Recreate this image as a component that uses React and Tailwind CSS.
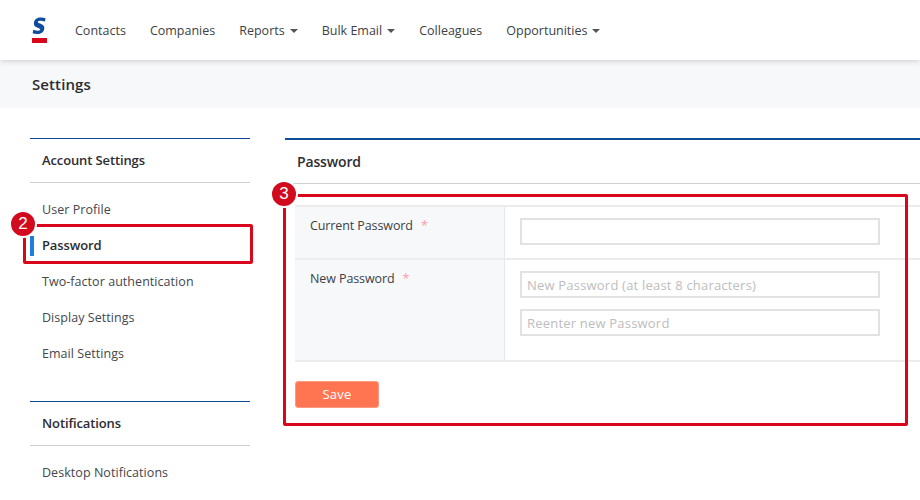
import React from 'react';

const font = { fontFamily: '"Open Sans", sans-serif' };

// --- Nav ---
const Caret = () => (
  <span className="ml-[5px] inline-block h-0 w-0 border-x-[4px] border-t-[4px] border-x-transparent border-t-[#555]" />
);

const NavItem = ({ label, caret }) => (
  <div className="mt-[2px] flex items-center text-[12.5px] text-[#3c3f45]">
    {label}
    {caret && <Caret />}
  </div>
);

const Logo = () => (
  <div className="flex w-[15px] flex-col items-center">
    <svg width="15" height="18" viewBox="0 0 15 18">
      <path
        d="M13.6 1.2 L12.9 4.6 C10.6 3.9 8.9 3.7 7.6 3.8 C6.4 3.9 5.9 4.3 5.9 4.9 C5.9 5.5 6.5 5.8 8.2 6.5 C11.2 7.6 12.6 8.9 12.3 11.5 C11.9 15.3 8.9 17 5.2 17 C3.6 17 2 16.8 0.6 16.3 L1.3 12.8 C3.3 13.5 5 13.8 6.3 13.7 C7.6 13.6 8.2 13.2 8.2 12.5 C8.2 11.9 7.6 11.5 5.8 10.8 C3 9.7 1.6 8.3 1.9 5.9 C2.3 2.3 5.3 0.6 8.9 0.6 C10.5 0.6 12.2 0.8 13.6 1.2 Z"
        fill="#0f4c9c"
      />
    </svg>
    <div className="mt-[3px] h-[5px] w-[15px] bg-[#d9061c]" />
  </div>
);

// --- Annotation badge ---
const Badge = ({ n, className }) => (
  <div
    className={`absolute flex h-[28px] w-[28px] items-center justify-center rounded-full border-2 border-white bg-[#d20a1e] text-[17px] text-white ${className}`}
    style={{ fontFamily: '"Liberation Sans", sans-serif' }}
  >
    {n}
  </div>
);

const SideTitle = ({ children }) => (
  <div className="flex h-[45px] items-center border-y border-t-[#0f4c9c] border-b-[#d0d0d0] pl-3 text-[13px] font-semibold tracking-[-0.12px] text-[#2b2d31]">
    {children}
  </div>
);

const SideItem = ({ label, active }) => (
  <div className={`relative flex h-[36px] items-center pl-3 ${active ? 'text-[13px] font-semibold tracking-[-0.12px] text-[#2b2d31]' : 'text-[12.5px] tracking-[0.05px] text-[#44474c]'}`}>
    {active && <div className="absolute left-0 top-[8px] h-[20px] w-[4px] bg-[#1a7fe0]" />}
    {label}
  </div>
);

const Field = ({ placeholder }) => (
  <input
    readOnly
    placeholder={placeholder}
    className="h-[27px] w-[360px] border-2 border-[#e2e2e2] bg-white px-[5px] text-[13px] tracking-[0.2px] outline-none placeholder:text-[#bdbdbd]"
    style={font}
  />
);

const Label = ({ children }) => (
  <div className="w-[210px] shrink-0 border-r border-[#e6e6e6] bg-[#f7f8fa] pl-[15px] pt-[10px] text-[12.5px] tracking-[-0.1px] text-[#3c3f45]">
    {children}
    <span className="ml-[8px] text-[#f7a0a6]">*</span>
  </div>
);

export default function App() {
  return (
    <div className="relative h-[500px] w-[920px] overflow-hidden bg-white" style={font}>
      {/* top nav */}
      <header className="relative z-10 flex h-[60px] items-center gap-[24px] bg-white pl-[32px] shadow-[0_1px_6px_rgba(0,0,0,0.18)]">
        <div className="mr-[4px]"><Logo /></div>
        <NavItem label="Contacts" />
        <NavItem label="Companies" />
        <NavItem label="Reports" caret />
        <NavItem label="Bulk Email" caret />
        <NavItem label="Colleagues" />
        <NavItem label="Opportunities" caret />
      </header>

      <div className="flex h-[48px] items-center bg-[#f7f8fa] pl-[32px] text-[15px] font-semibold tracking-[0.1px] text-[#2b2d31]">
        Settings
      </div>

      <div className="flex pt-[30px]">
        {/* sidebar */}
        <aside className="relative ml-[30px] w-[220px] shrink-0">
          <SideTitle>Account Settings</SideTitle>
          <div className="pt-[9px]">
            <SideItem label="User Profile" />
            <SideItem label="Password" active />
            <SideItem label="Two-factor authentication" />
            <SideItem label="Display Settings" />
            <SideItem label="Email Settings" />
          </div>
          <div className="mt-[29px]">
            <SideTitle>Notifications</SideTitle>
          </div>
          <div className="pt-[9px]">
            <SideItem label="Desktop Notifications" />
          </div>
          <div className="absolute left-[-7px] top-[86px] h-[40px] w-[230px] rounded-[2px] border-[3px] border-[#d9061c]" />
          <Badge n="2" className="left-[-21px] top-[72px]" />
        </aside>

        {/* main */}
        <main className="relative ml-[35px] flex-1">
          <div className="h-[2px] bg-[#0f4c9c]" />
          <div className="flex h-[44px] items-center border-b border-[#d0d0d0] pl-[12px] text-[14px] font-semibold tracking-[-0.15px] text-[#2b2d31]">
            Password
          </div>
          <div className="ml-[10px] mt-[21px] border-t-2 border-[#ececec]">
            <div className="flex h-[53px] border-b-2 border-[#ececec]">
              <Label>Current Password</Label>
              <div className="pl-[15px] pt-[11px]"><Field /></div>
            </div>
            <div className="flex h-[102px] border-b-2 border-[#ececec]">
              <Label>New Password</Label>
              <div className="flex flex-col gap-[11px] pl-[15px] pt-[11px]">
                <Field placeholder="New Password (at least 8 characters)" />
                <Field placeholder="Reenter new Password" />
              </div>
            </div>
            <button className="mt-[19px] h-[27px] w-[84px] rounded-[3px] border border-[#ff9a80] bg-[#ff7552] text-[13px] tracking-[0.25px] text-white" style={font}>
              Save
            </button>
          </div>
          <div className="absolute left-[-2px] top-[56px] h-[232px] w-[625px] rounded-[2px] border-[3px] border-[#d9061c]" />
          <Badge n="3" className="left-[-15px] top-[42px]" />
        </main>
      </div>
    </div>
  );
}
